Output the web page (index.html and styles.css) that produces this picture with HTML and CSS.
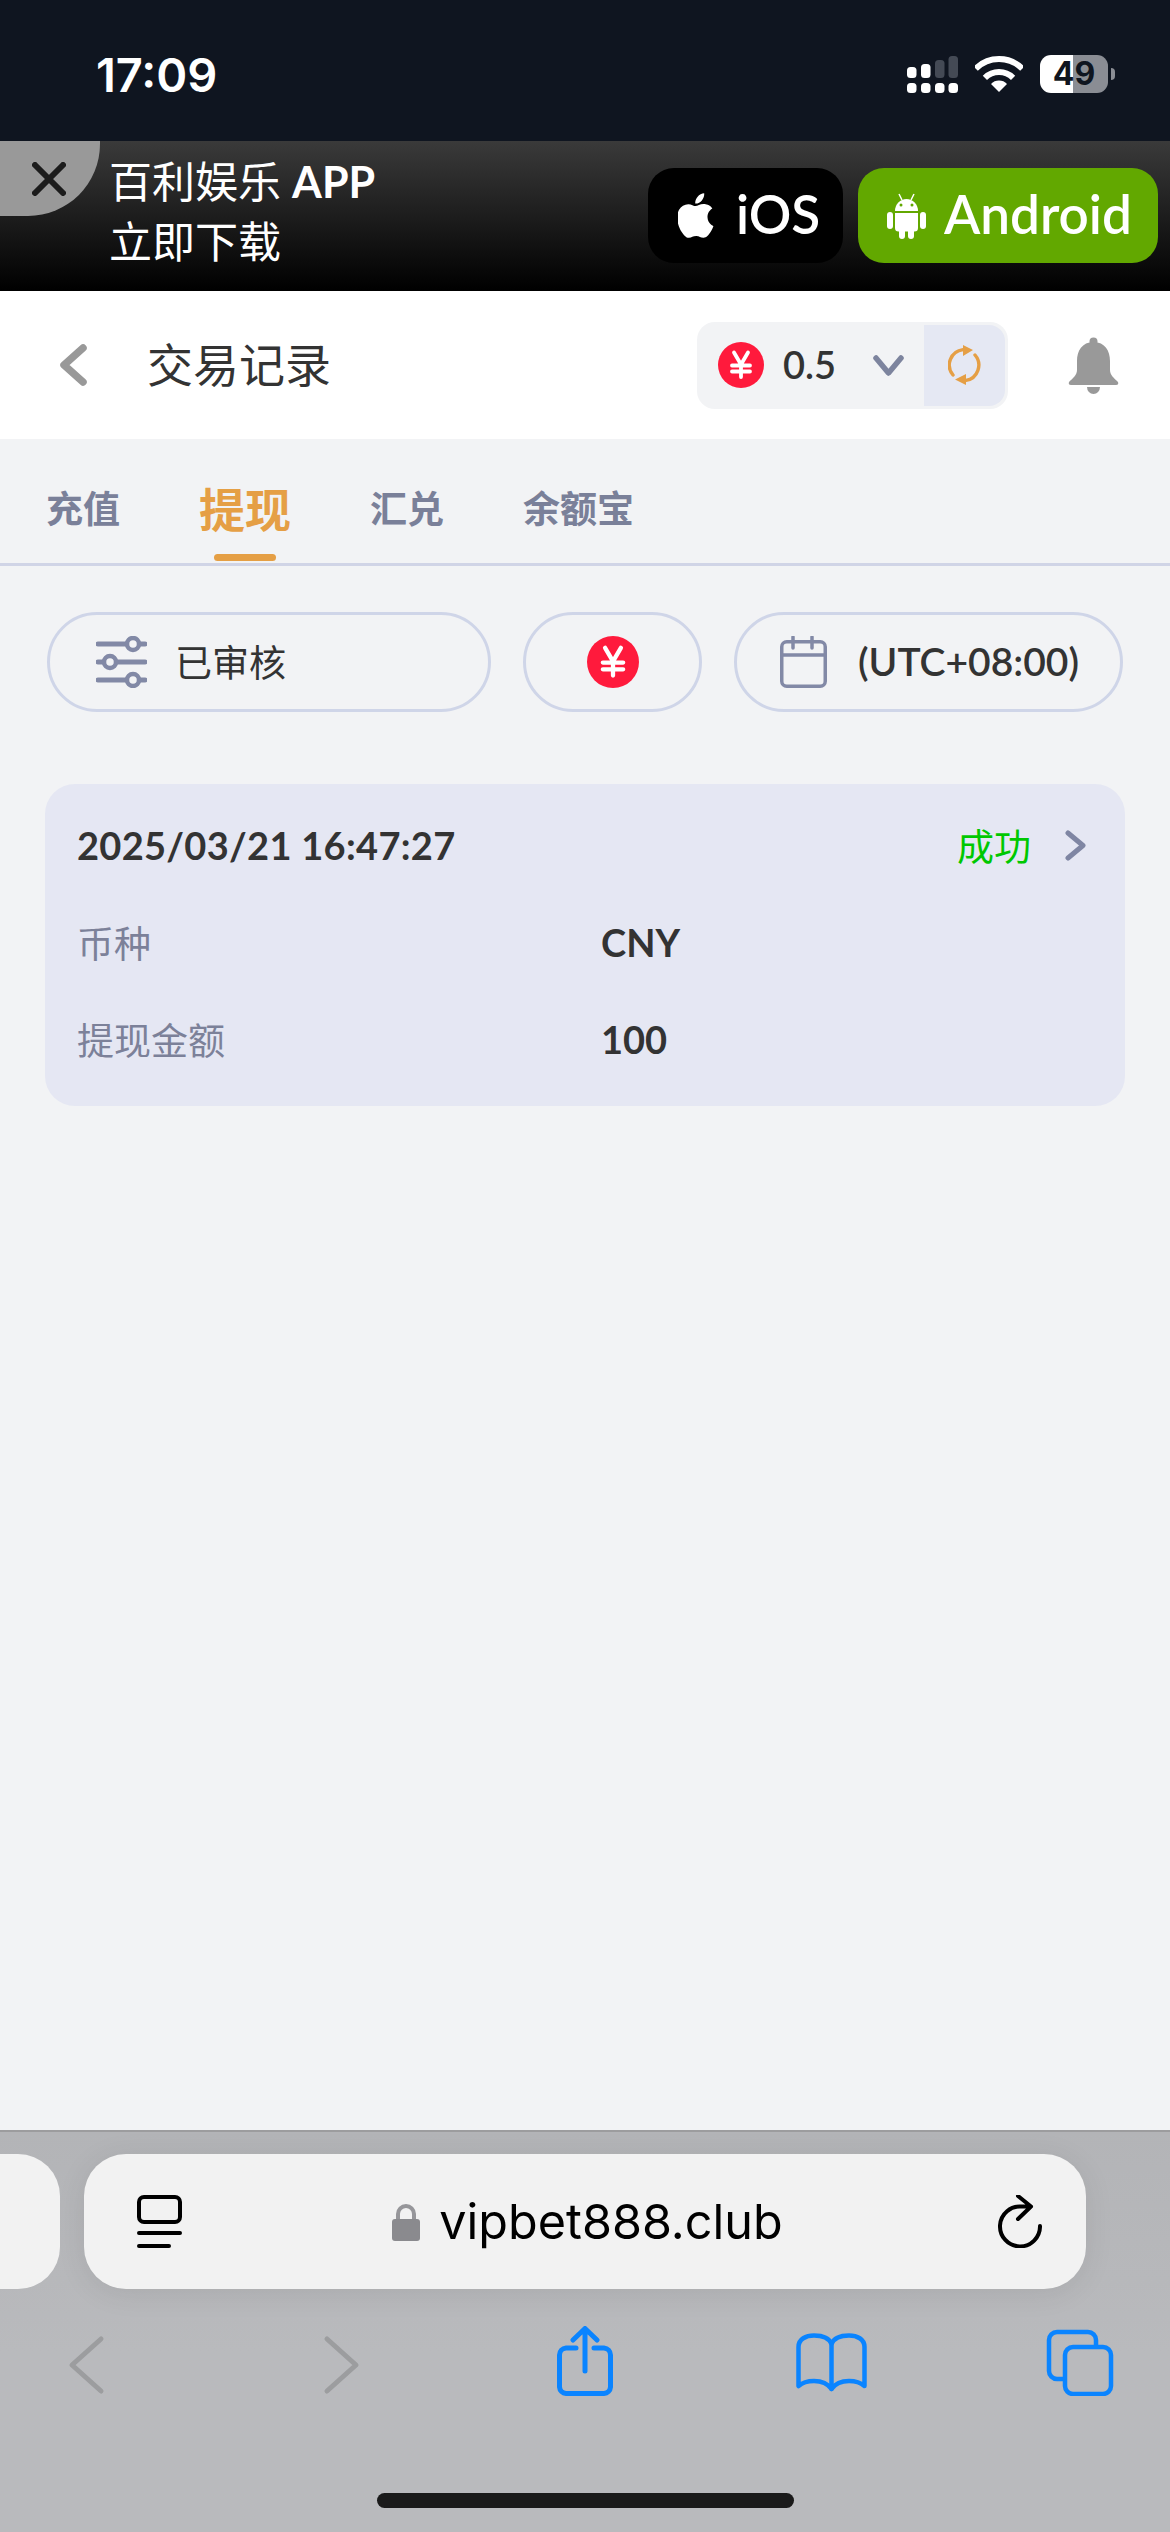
FILE: index.html
```html
<!DOCTYPE html>
<html lang="zh-CN">
<head>
  <meta charset="UTF-8">
  <meta name="viewport" content="width=device-width, initial-scale=1.0">
  <title>交易记录</title>
  <link rel="stylesheet" href="styles.css">
</head>
<body>
  <svg class="defs" width="0" height="0">
    <symbol id="yen" viewBox="0 0 46 46">
      <circle cx="23" cy="23" r="23" fill="#ff1a3c"/>
      <path d="M16 10.500L23 22.500L30 10.500M14 23.500H32M14 29.500H32M23 22.500V35" fill="none" stroke="#fff" stroke-width="3.800" stroke-linecap="round" stroke-linejoin="round"/>
    </symbol>
  </svg>

  <div class="page">
    <div class="status-bar">
      <span class="time">17:09</span>
      <div class="status-icons">
        <svg class="signal" width="51" height="37" viewBox="0 0 51 37">
          <g fill="#fff">
            <rect x="0" y="11" width="9.500" height="11" rx="3.500"/>
            <rect x="14" y="8" width="9.500" height="14" rx="3.500"/>
            <rect x="0" y="27" width="9.500" height="10" rx="3.500"/>
            <rect x="14" y="27" width="9.500" height="10" rx="3.500"/>
            <rect x="28" y="27" width="9.500" height="10" rx="3.500"/>
            <rect x="41.500" y="27" width="9.500" height="10" rx="3.500"/>
          </g>
          <g fill="#444a55">
            <rect x="28" y="4" width="9.500" height="18" rx="3.500"/>
            <rect x="41.500" y="0" width="9.500" height="22" rx="3.500"/>
          </g>
        </svg>
        <svg class="wifi" width="48" height="36" viewBox="0 0 48 36">
          <path d="M.7 12.700A33 33 0 0 1 47.300 12.700M9.900 21.900A20 20 0 0 1 38.100 21.900" fill="none" stroke="#fff" stroke-width="6"/>
          <path d="M24 36L16 28A11 11 0 0 1 32 28Z" fill="#fff"/>
        </svg>
        <span class="battery">49</span>
      </div>
    </div>

    <div class="app-banner">
      <div class="banner-close">
        <svg width="34" height="34" viewBox="0 0 34 34">
          <path d="M3 3L31 31M31 3L3 31" stroke="#1c1c1c" stroke-width="6" stroke-linecap="round"/>
        </svg>
      </div>
      <div class="banner-text">
        <div>百利娱乐 <b>APP</b></div>
        <div>立即下载</div>
      </div>
      <div class="banner-buttons">
        <a class="store-btn ios">
          <svg width="38" height="46" viewBox="0 0 20.500 24.500">
            <path fill="#fff" d="M9.500 6.896c-.948 0-2.415-1.078-3.960-1.040-2.040.027-3.910 1.183-4.961 3.014-2.117 3.675-.546 9.103 1.519 12.090 1.013 1.454 2.208 3.090 3.792 3.039 1.520-.065 2.090-.987 3.935-.987 1.831 0 2.350.987 3.960.948 1.637-.026 2.676-1.480 3.676-2.948 1.156-1.688 1.636-3.325 1.662-3.415-.039-.013-3.182-1.221-3.220-4.857-.026-3.040 2.480-4.494 2.597-4.559-1.429-2.090-3.623-2.324-4.390-2.376-2-.156-3.675 1.090-4.610 1.090zM12.878 3.830c.843-1.012 1.400-2.427 1.245-3.830-1.207.052-2.662.805-3.532 1.818-.780.896-1.454 2.338-1.273 3.714 1.338.104 2.715-.688 3.559-1.701"/>
          </svg>
          <span>iOS</span>
        </a>
        <a class="store-btn android">
          <svg width="39" height="46" viewBox="0 0 39 46">
            <g fill="#fff">
              <path d="M8 18A11.500 12 0 0 1 31 18Z"/>
              <path d="M8 20H31V35A3.500 3.500 0 0 1 27.500 38.500H11.500A3.500 3.500 0 0 1 8 35Z"/>
              <rect x="0" y="19" width="6" height="17" rx="3"/>
              <rect x="33" y="19" width="6" height="17" rx="3"/>
              <rect x="12" y="34" width="6" height="12" rx="3"/>
              <rect x="21" y="34" width="6" height="12" rx="3"/>
            </g>
            <path d="M12 1L15 7M27 1L24 7" stroke="#fff" stroke-width="1.500"/>
            <circle cx="14" cy="12" r="1.500" fill="#62a800"/>
            <circle cx="25" cy="12" r="1.500" fill="#62a800"/>
          </svg>
          <span>Android</span>
        </a>
      </div>
    </div>

    <header class="top-nav">
      <svg class="nav-back" width="27" height="42" viewBox="0 0 27 42">
        <path d="M23 4L4 21L23 38" fill="none" stroke="#999" stroke-width="7.500" stroke-linecap="round" stroke-linejoin="round"/>
      </svg>
      <h1 class="nav-title">交易记录</h1>
      <div class="wallet">
        <div class="wallet-balance">
          <svg width="46" height="46"><use href="#yen"/></svg>
          <span class="wallet-amount">0.5</span>
          <svg class="wallet-caret" width="31" height="21" viewBox="0 0 31 21">
            <path d="M3 3L15.500 18L28 3" fill="none" stroke="#7d849e" stroke-width="5.500" stroke-linecap="round" stroke-linejoin="round"/>
          </svg>
        </div>
        <div class="wallet-refresh">
          <svg width="33" height="40" viewBox="0 0 33 40">
            <g fill="none" stroke="#e59f45" stroke-width="3.400" stroke-linecap="round">
              <path d="M5 30A15.500 15.500 0 0 1 15 4.600"/>
              <path d="M27 10A15.500 15.500 0 0 1 18 35.400"/>
            </g>
            <path d="M15 0L25 5L15 11ZM18 29L7 34.500L18 40Z" fill="#e59f45"/>
          </svg>
        </div>
      </div>
      <svg class="nav-bell" width="51" height="57" viewBox="0 0 51 57">
        <g fill="#999">
          <circle cx="25.500" cy="4.500" r="4"/>
          <path d="M25.500 5C14 5 9 14 9 24V33C9 38 5 41 1 45Q0 48 3 48H48Q51 48 50 45C46 41 42 38 42 33V24C42 14 37 5 25.500 5Z"/>
          <path d="M19 50H32A6.500 7 0 0 1 19 50Z"/>
        </g>
      </svg>
    </header>

    <nav class="tabs">
      <a class="tab">充值</a>
      <a class="tab active">提现</a>
      <a class="tab">汇兑</a>
      <a class="tab">余额宝</a>
    </nav>

    <main class="content">
      <div class="filters">
        <div class="filter filter-status">
          <svg width="51" height="52" viewBox="0 0 51 52">
            <path d="M2 8H49M2 26H49M2 44H49" stroke="#8289a6" stroke-width="5" stroke-linecap="round"/>
            <g fill="#f2f3f5" stroke="#8289a6" stroke-width="4.500">
              <circle cx="37" cy="8" r="6"/>
              <circle cx="14" cy="26" r="6"/>
              <circle cx="37" cy="44" r="6"/>
            </g>
          </svg>
          <span>已审核</span>
        </div>
        <div class="filter filter-currency">
          <svg width="52" height="52"><use href="#yen"/></svg>
        </div>
        <div class="filter filter-date">
          <svg width="47" height="52" viewBox="0 0 47 52">
            <g fill="none" stroke="#8289a6" stroke-width="3.500">
              <rect x="1.750" y="5.750" width="43.500" height="44.500" rx="5"/>
              <path d="M2 19H45"/>
              <path d="M13 1V12M32 1V12" stroke-linecap="round"/>
            </g>
          </svg>
          <span>(UTC+08:00)</span>
        </div>
      </div>

      <section class="record">
        <div class="record-head">
          <span class="record-date">2025/03/21 16:47:27</span>
          <span class="record-status">成功</span>
          <svg width="23" height="31" viewBox="0 0 23 31">
            <path d="M4 3L19 15.500L4 28" fill="none" stroke="#7f86a3" stroke-width="5" stroke-linecap="round" stroke-linejoin="round"/>
          </svg>
        </div>
        <div class="record-row">
          <span class="record-label">币种</span>
          <span class="record-value">CNY</span>
        </div>
        <div class="record-row">
          <span class="record-label">提现金额</span>
          <span class="record-value">100</span>
        </div>
      </section>
    </main>

    <footer class="browser-bar">
      <div class="url-row">
        <div class="tab-peek"></div>
        <div class="url-bar">
          <svg class="url-tabs" width="45" height="54" viewBox="0 0 45 54">
            <rect x="2" y="2" width="41" height="25" rx="5" fill="none" stroke="#000" stroke-width="4"/>
            <path d="M2 38H43M2 51H32" stroke="#000" stroke-width="4" stroke-linecap="round"/>
          </svg>
          <div class="url-address">
            <svg width="28" height="38" viewBox="0 0 28 38">
              <path d="M6 17V11A8 8 0 0 1 22 11V17" fill="none" stroke="#96969a" stroke-width="4"/>
              <rect x="0" y="16" width="28" height="22" rx="3" fill="#8a8a8e"/>
            </svg>
            <span>vipbet888.club</span>
          </div>
          <svg class="url-reload" width="44" height="53" viewBox="0 0 44 53">
            <path d="M20 1L33 11.500L20 24M33 11.500H24A20 20 0 1 0 42 31" fill="none" stroke="#000" stroke-width="4" stroke-linecap="round" stroke-linejoin="round"/>
          </svg>
        </div>
      </div>
      <div class="browser-nav">
        <svg width="120" height="70" viewBox="0 0 120 70">
          <path d="M75 13L46 39L75 65" fill="none" stroke="#9c9d9f" stroke-width="5" stroke-linecap="round" stroke-linejoin="round"/>
        </svg>
        <svg width="120" height="70" viewBox="0 0 120 70">
          <path d="M46 13L75 39L46 65" fill="none" stroke="#9c9d9f" stroke-width="5" stroke-linecap="round" stroke-linejoin="round"/>
        </svg>
        <svg width="120" height="70" viewBox="0 0 120 70">
          <g transform="translate(32 0)" fill="none" stroke="#0a84ff" stroke-width="5" stroke-linecap="round" stroke-linejoin="round">
            <path d="M19 22H9A7 7 0 0 0 2.500 29V61A7 7 0 0 0 9 67.500H47A7 7 0 0 0 53.500 61V29A7 7 0 0 0 47 22H37"/>
            <path d="M28 3V45M16 14L28 2.500L40 14"/>
          </g>
        </svg>
        <svg width="120" height="70" viewBox="0 0 120 70">
          <g transform="translate(24 7)" fill="none" stroke="#0a84ff" stroke-width="4.500" stroke-linecap="round" stroke-linejoin="round">
            <path d="M2.500 53V14C2.500 6 10 2.500 18 2.500C26 2.500 33 5 35.500 11C38 5 45 2.500 53 2.500C61 2.500 68.500 6 68.500 14V53C64 49 59 48 53 48C45 48 39 51 35.500 56C32 51 26 48 18 48C12 48 7 49 2.500 53Z"/>
            <path d="M35.500 11V56"/>
          </g>
        </svg>
        <svg width="120" height="70" viewBox="0 0 120 70">
          <g transform="translate(27 4)" fill="none" stroke="#0a84ff" stroke-width="4.500" stroke-linecap="round" stroke-linejoin="round">
            <path d="M49 15V10A8 8 0 0 0 41 2H10A8 8 0 0 0 2 10V41A8 8 0 0 0 10 49H16"/>
            <rect x="18" y="17" width="46" height="47" rx="8"/>
          </g>
        </svg>
      </div>
      <div class="home-indicator"></div>
    </footer>
  </div>
</body>
</html>
```

FILE: styles.css
```css
* {
  box-sizing: border-box;
}

body {
  margin: 0;
  font-family: 'Lato', 'Noto Sans CJK SC', sans-serif;
  background-color: #f2f3f5;
  color: #333;
}

svg {
  display: block;
  flex-shrink: 0;
}

.defs {
  position: absolute;
}

.page {
  display: flex;
  flex-direction: column;
  width: 1170px;
  height: 2532px;
  overflow: hidden;
}

/* phone status bar */
.status-bar {
  display: flex;
  justify-content: space-between;
  align-items: center;
  height: 141px;
  padding: 7px 55px 0 96px;
  background-color: #0f1520;
  color: #fff;
}

.time {
  font-family: 'Inter', sans-serif;
  font-size: 47px;
  font-weight: 600;
}

.status-icons {
  display: flex;
  align-items: center;
  gap: 17px;
}

.battery {
  position: relative;
  width: 68px;
  height: 38px;
  margin-right: 7px;
  border-radius: 11px;
  background: linear-gradient(to right, #fff 48.500%, #8a8d94 48.500%);
  color: #0f1520;
  font-family: 'Inter', sans-serif;
  font-size: 32px;
  font-weight: 700;
  line-height: 38px;
  text-align: center;
}

.battery::after {
  content: '';
  position: absolute;
  top: 13px;
  left: 71px;
  width: 4px;
  height: 12px;
  border-radius: 0 4px 4px 0;
  background-color: #8a8d94;
}

/* download banner */
.app-banner {
  display: flex;
  height: 150px;
  background: linear-gradient(to bottom, #3a3a3a, #000);
  color: #fff;
}

.banner-close {
  display: flex;
  align-items: center;
  justify-content: center;
  width: 100px;
  height: 75px;
  padding-right: 3px;
  border-bottom-right-radius: 72px;
  background-color: #999;
}

.banner-text {
  margin-left: 9px;
  padding-top: 11px;
  font-size: 43px;
  line-height: 60px;
}

.banner-text b {
  font-weight: 700;
}

.banner-buttons {
  display: flex;
  gap: 15px;
  margin-left: auto;
  padding: 27px 12px 0 0;
}

.store-btn {
  display: flex;
  align-items: center;
  height: 95px;
  border-radius: 26px;
  font-size: 53px;
  font-weight: 600;
}

.store-btn span {
  padding-bottom: 5px;
}

.ios {
  width: 195px;
  padding-left: 30px;
  gap: 20px;
  background-color: #000;
}

.android {
  width: 300px;
  padding-left: 29px;
  gap: 18px;
  background-color: #62a800;
}

/* page header */
.top-nav {
  display: flex;
  align-items: center;
  height: 148px;
  padding: 0 51px 0 60px;
  background-color: #fff;
}

.nav-title {
  margin: 0 0 0 60px;
  padding-bottom: 6px;
  font-size: 46px;
  font-weight: 400;
}

.wallet {
  display: flex;
  width: 311px;
  height: 87px;
  margin-left: auto;
  margin-right: 60px;
  padding: 3px;
  border-radius: 18px;
  background-color: #f2f3f5;
}

.wallet-balance {
  display: flex;
  align-items: center;
  width: 224px;
  padding-left: 18px;
}

.wallet-amount {
  margin-left: 19px;
  padding-bottom: 2px;
  font-size: 38px;
  font-weight: 600;
}

.wallet-caret {
  margin-left: 37px;
}

.wallet-refresh {
  display: flex;
  align-items: center;
  justify-content: center;
  flex: 1;
  border-radius: 0 16px 16px 0;
  background-color: #e5e8f3;
}

/* tabs */
.tabs {
  display: flex;
  align-items: center;
  gap: 79px;
  height: 127px;
  padding: 12px 0 0 46px;
  border-bottom: 3px solid #d0d4e6;
}

.tab {
  position: relative;
  font-size: 37px;
  font-weight: 700;
  color: #7a8099;
}

.tab.active {
  font-size: 46px;
  color: #e59f45;
}

.tab.active::after {
  content: '';
  position: absolute;
  left: 15px;
  bottom: -21px;
  width: 62px;
  height: 7px;
  border-radius: 4px;
  background-color: #e59f45;
}

/* filter pills and record card */
.content {
  flex: 1;
  padding: 46px 45px 0;
}

.filters {
  display: flex;
  gap: 32px;
  padding-left: 2px;
}

.filter {
  display: flex;
  align-items: center;
  height: 100px;
  border: 3px solid #cfd5e8;
  border-radius: 50px;
  font-size: 37px;
}

.filter span {
  padding-bottom: 3px;
}

.filter-status {
  width: 444px;
  padding-left: 46px;
  gap: 28px;
}

.filter-currency {
  width: 179px;
  justify-content: center;
}

.filter-date {
  width: 389px;
  padding-left: 43px;
  gap: 31px;
  font-size: 39px;
  font-weight: 600;
}

.record {
  height: 322px;
  margin-top: 72px;
  padding: 36px 38px 0 32px;
  border-radius: 30px;
  background-color: #e5e7f3;
}

.record-head {
  display: flex;
  align-items: center;
  height: 50px;
}

.record-date {
  font-size: 38px;
  font-weight: 700;
  letter-spacing: 0.3px;
}

.record-status {
  margin-left: auto;
  margin-right: 33px;
  font-size: 37px;
  color: #00c800;
}

.record-row {
  display: flex;
  align-items: center;
  height: 50px;
  margin-top: 47px;
}

.record-label {
  width: 524px;
  font-size: 37px;
  color: #7c8199;
}

.record-value {
  font-size: 38px;
  font-weight: 700;
}

/* browser toolbar */
.browser-bar {
  display: flex;
  flex-direction: column;
  height: 402px;
  border-top: 2px solid #9c9c9e;
  background: linear-gradient(to bottom, #b3b4b7, #b9babd 55%);
}

.url-row {
  display: flex;
  gap: 24px;
  margin-top: 22px;
}

.tab-peek {
  width: 60px;
  height: 135px;
  border-radius: 0 42px 42px 0;
  background-color: #f2f2f2;
}

.url-bar {
  display: flex;
  align-items: center;
  justify-content: space-between;
  width: 1002px;
  height: 135px;
  padding: 0 44px 0 53px;
  border-radius: 42px;
  background-color: #f2f2f2;
  box-shadow: 0 4px 30px rgba(0, 0, 0, 0.08);
}

.url-address {
  display: flex;
  align-items: center;
  gap: 19px;
  margin-right: 5px;
  font-family: 'Inter', sans-serif;
  font-size: 48.500px;
  color: #000;
}

.browser-nav {
  display: grid;
  grid-template-columns: 255px 244px 247px 248px 120px;
  padding: 37px 0 0 26px;
}

.home-indicator {
  width: 417px;
  height: 15px;
  margin: 97px auto 0;
  border-radius: 8px;
  background-color: #1a1a1a;
}
```
